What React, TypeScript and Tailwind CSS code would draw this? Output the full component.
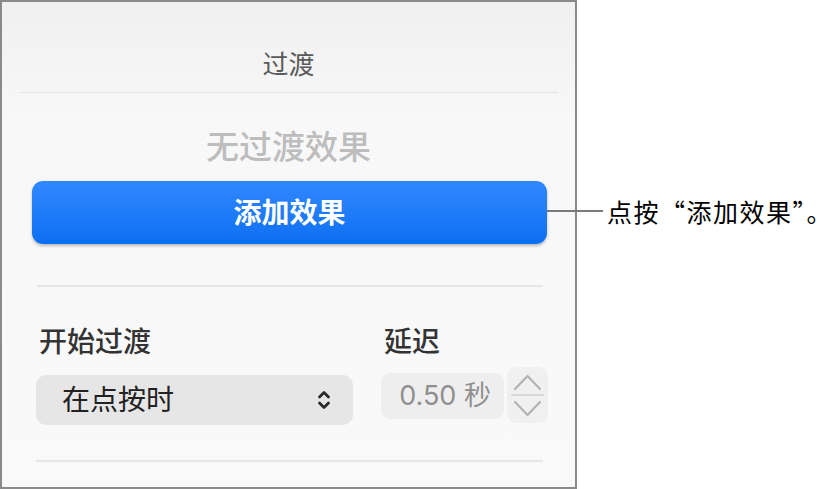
const SelectChevron = () => (
  <svg width="14" height="22" viewBox="0 0 14 22" fill="none" stroke="#2a2a2a" strokeWidth="2.8" strokeLinecap="round" strokeLinejoin="round">
    <path d="M2.5 8 L7 3.5 L11.5 8" />
    <path d="M2.5 14 L7 18.5 L11.5 14" />
  </svg>
);

const StepperArrows = () => (
  <svg width="41" height="56" viewBox="0 0 41 56" fill="none" strokeLinecap="round" strokeLinejoin="round">
    <path d="M8 22 L20.5 9 L33 22" stroke="#b3b3b3" strokeWidth="2.2" />
    <path d="M5 28 L36 28" stroke="#d8d8d8" strokeWidth="2" />
    <path d="M8 35 L20.5 48 L33 35" stroke="#b3b3b3" strokeWidth="2.2" />
  </svg>
);

const App = () => {
  return (
    <div className="relative w-[838px] h-[489px] bg-white flex font-['Inter','Noto_Sans_CJK_SC',sans-serif] overflow-hidden">
      <div className="w-[577px] h-[489px] shrink-0 border-2 border-[#8a8a8a] bg-gradient-to-b from-[#f0f0f0] via-[#f8f8f8] via-25% to-[#f9f9f9] flex flex-col">
        <div className="h-[90px] pt-[48px] flex justify-center">
          <span className="text-[26px] leading-[30px] text-[#5a5a5a]">过渡</span>
        </div>
        <div className="h-px mx-[17px] bg-[#e4e4e4]" />

        <div className="mt-[34px] h-[40px] flex items-center justify-center">
          <span className="text-[33px] leading-[40px] font-medium text-[#bdbdbd]">无过渡效果</span>
        </div>

        <button className="mt-[14px] ml-[30px] w-[515px] h-[63px] rounded-[11px] bg-gradient-to-b from-[#3088ff] to-[#0a6ff2] shadow-[0_2px_3px_rgba(0,0,0,0.25)] flex items-center justify-center">
          <span className="text-[28px] font-semibold text-white">添加效果</span>
        </button>

        <div className="mt-[41px] ml-[35px] w-[506px] h-[2px] bg-[#e6e6e6]" />

        <div className="mt-[38px] ml-[34px] flex">
          <div className="w-[345px] flex flex-col">
            <span className="pl-[3px] h-[34px] text-[28px] leading-[34px] font-medium text-[#333]">开始过渡</span>
            <div className="mt-[16px] w-[317px] h-[50px] rounded-[10px] bg-[#e6e6e6] flex items-center justify-between pl-[26px] pr-[22px]">
              <span className="text-[28px] text-[#222]">在点按时</span>
              <SelectChevron />
            </div>
          </div>
          <div className="flex flex-col">
            <span className="pl-[3px] h-[34px] text-[28px] leading-[34px] font-medium text-[#333]">延迟</span>
            <div className="flex items-start">
              <div className="mt-[14px] w-[123px] h-[46px] rounded-[9px] bg-[#eeeeee] flex items-center justify-end pr-[13px]">
                <span className="text-[27px] text-[#8e8e8e]">0.50 秒</span>
              </div>
              <div className="mt-[8px] ml-[3px] w-[41px] h-[56px] rounded-[9px] bg-[#f0f0f0] flex items-center justify-center">
                <StepperArrows />
              </div>
            </div>
          </div>
        </div>

        <div className="mt-[35px] ml-[34px] w-[507px] h-[2px] bg-[#e6e6e6]" />
      </div>

      <div className="pt-[196px] pl-[30px]">
        <span className="text-[25px] leading-[30px] tracking-[1.5px] text-black font-['Noto_Sans_CJK_SC',sans-serif]">点按“添加效果”。</span>
      </div>

      <div className="absolute left-[547px] top-[210px] w-[56px] h-[2px] bg-[#7a7a7a]" />
    </div>
  );
};

export default App;
